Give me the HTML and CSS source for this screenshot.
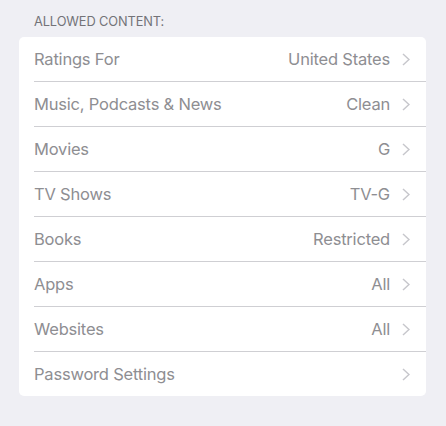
FILE: index.html
```html
<!DOCTYPE html>
<html lang="en">
<head>
    <meta charset="UTF-8">
    <title>Allowed Content</title>
    <link rel="stylesheet" href="styles.css">
</head>
<body>

<div class="section">
    <div class="section-header">ALLOWED CONTENT:</div>
    <div class="group">
        <div class="row">
            <span class="row-label">Ratings For</span>
            <span class="row-value">United States</span>
            <svg class="chevron" viewBox="0 0 8 13"><path d="M1 1l6 5.5L1 12"/></svg>
        </div>
        <div class="row">
            <span class="row-label">Music, Podcasts &amp; News</span>
            <span class="row-value">Clean</span>
            <svg class="chevron" viewBox="0 0 8 13"><path d="M1 1l6 5.5L1 12"/></svg>
        </div>
        <div class="row">
            <span class="row-label">Movies</span>
            <span class="row-value">G</span>
            <svg class="chevron" viewBox="0 0 8 13"><path d="M1 1l6 5.5L1 12"/></svg>
        </div>
        <div class="row">
            <span class="row-label">TV Shows</span>
            <span class="row-value">TV-G</span>
            <svg class="chevron" viewBox="0 0 8 13"><path d="M1 1l6 5.5L1 12"/></svg>
        </div>
        <div class="row">
            <span class="row-label">Books</span>
            <span class="row-value">Restricted</span>
            <svg class="chevron" viewBox="0 0 8 13"><path d="M1 1l6 5.5L1 12"/></svg>
        </div>
        <div class="row">
            <span class="row-label">Apps</span>
            <span class="row-value">All</span>
            <svg class="chevron" viewBox="0 0 8 13"><path d="M1 1l6 5.5L1 12"/></svg>
        </div>
        <div class="row">
            <span class="row-label">Websites</span>
            <span class="row-value">All</span>
            <svg class="chevron" viewBox="0 0 8 13"><path d="M1 1l6 5.5L1 12"/></svg>
        </div>
        <div class="row">
            <span class="row-label">Password Settings</span>
            <span class="row-value"></span>
            <svg class="chevron" viewBox="0 0 8 13"><path d="M1 1l6 5.5L1 12"/></svg>
        </div>
    </div>
</div>

</body>
</html>
```

FILE: styles.css
```css
/* general */
body {
    margin: 0;
    background: #efeff4;
    font-family: Inter, "Liberation Sans", sans-serif;
    height: 426px;
}

.section {
    padding: 0 20px 0 19px;
}

.section-header {
    font-size: 12.8px;
    letter-spacing: -0.1px;
    color: #737378;
    padding: 14px 0 0 15px;
    height: 23px;
    line-height: 16px;
}

.group {
    background: #fff;
    border-radius: 5px;
    padding-left: 15px;
}

.row {
    display: flex;
    align-items: center;
    height: 44px;
    border-bottom: 1px solid #cfcfd3;
    font-size: 16.5px;
    letter-spacing: -0.2px;
    color: #8e8e92;
}

.row:last-child {
    border-bottom: none;
}

.row-label {
    flex: 1;
}

.row-value {
    margin-right: 12px;
}

.chevron {
    width: 8px;
    height: 13px;
    margin-right: 16px;
    fill: none;
    stroke: #c7c7cc;
    stroke-width: 1.5;
}
```
